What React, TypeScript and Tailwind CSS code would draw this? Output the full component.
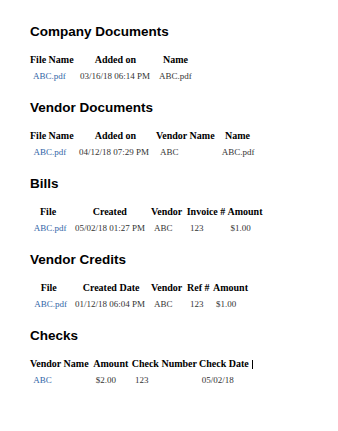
import React from "react";

type Col = { w: string; hp: string; dp: string };
type TableProps = { cols: Col[]; headers: string[]; row: string[]; linkCols: number[]; caret?: boolean };

function DocTable({ cols, headers, row, linkCols, caret }: TableProps) {
  return (
    <div className="mt-[14px] font-['Liberation_Serif','Times_New_Roman',serif]">
      <div className="flex h-[12px] leading-[12px] text-[10px] font-bold text-black whitespace-nowrap">
        {headers.map((h, i) => (
          <div key={i} className={`${cols[i].w} ${cols[i].hp} shrink-0`}>
            {h}
            {caret && i === headers.length - 1 ? (
              <span className="inline-block w-px h-[9px] bg-black ml-[3px] align-[-2px]" />
            ) : null}
          </div>
        ))}
      </div>
      <div className="mt-[4px] flex h-[12px] leading-[12px] text-[9px] text-[#333] whitespace-nowrap">
        {row.map((d, i) => (
          <div key={i} className={`${cols[i].w} ${cols[i].dp} shrink-0`}>
            {linkCols.includes(i) ? <a className="text-[#2f64a6]">{d}</a> : d}
          </div>
        ))}
      </div>
    </div>
  );
}

function Section({ title, children }: { title: string; children: React.ReactNode }) {
  return (
    <section className="mb-[18px]">
      <h3 className="h-[16px] leading-[16px] text-[13.5px] font-bold text-black font-['Liberation_Sans',Arial,sans-serif]">
        {title}
      </h3>
      {children}
    </section>
  );
}

export default function App() {
  return (
    <div className="w-[338px] h-[431px] bg-white pl-[30px] pt-[23.5px] overflow-hidden">
      <Section title="Company Documents">
        <DocTable
          cols={[
            { w: "w-[50px]", hp: "pl-0", dp: "pl-[3px]" },
            { w: "w-[79px]", hp: "pl-[14.7px]", dp: "pl-0" },
            { w: "w-[60px]", hp: "pl-[4px]", dp: "pl-0" },
          ]}
          headers={["File Name", "Added on", "Name"]}
          row={["ABC.pdf", "03/16/18 06:14 PM", "ABC.pdf"]}
          linkCols={[0]}
        />
      </Section>
      <Section title="Vendor Documents">
        <DocTable
          cols={[
            { w: "w-[49px]", hp: "pl-0", dp: "pl-[3.5px]" },
            { w: "w-[77px]", hp: "pl-[15.7px]", dp: "pl-0" },
            { w: "w-[65.7px]", hp: "pl-0", dp: "pl-[4px]" },
            { w: "w-[60px]", hp: "pl-[3.3px]", dp: "pl-0" },
          ]}
          headers={["File Name", "Added on", "Vendor Name", "Name"]}
          row={["ABC.pdf", "04/12/18 07:29 PM", "ABC", "ABC.pdf"]}
          linkCols={[0]}
        />
      </Section>
      <Section title="Bills">
        <DocTable
          cols={[
            { w: "w-[45px]", hp: "pl-[10px]", dp: "pl-[3.7px]" },
            { w: "w-[76px]", hp: "pl-[17.7px]", dp: "pl-0" },
            { w: "w-[35.7px]", hp: "pl-0", dp: "pl-[3px]" },
            { w: "w-[40.8px]", hp: "pl-0", dp: "pl-[3.3px]" },
            { w: "w-[60px]", hp: "pl-0", dp: "pl-[3px]" },
          ]}
          headers={["File", "Created", "Vendor", "Invoice #", "Amount"]}
          row={["ABC.pdf", "05/02/18 01:27 PM", "ABC", "123", "$1.00"]}
          linkCols={[0]}
        />
      </Section>
      <Section title="Vendor Credits">
        <DocTable
          cols={[
            { w: "w-[45px]", hp: "pl-[10.7px]", dp: "pl-[4.3px]" },
            { w: "w-[76px]", hp: "pl-[7.7px]", dp: "pl-0" },
            { w: "w-[36px]", hp: "pl-0", dp: "pl-[3px]" },
            { w: "w-[26px]", hp: "pl-0", dp: "pl-[3px]" },
            { w: "w-[60px]", hp: "pl-0", dp: "pl-[3px]" },
          ]}
          headers={["File", "Created Date", "Vendor", "Ref #", "Amount"]}
          row={["ABC.pdf", "01/12/18 06:04 PM", "ABC", "123", "$1.00"]}
          linkCols={[0]}
        />
      </Section>
      <Section title="Checks">
        <DocTable
          cols={[
            { w: "w-[63.3px]", hp: "pl-0", dp: "pl-[3.3px]" },
            { w: "w-[38.4px]", hp: "pl-0", dp: "pl-[2.4px]" },
            { w: "w-[67.3px]", hp: "pl-0", dp: "pl-[3.3px]" },
            { w: "w-[70px]", hp: "pl-0", dp: "pl-[2.7px]" },
          ]}
          headers={["Vendor Name", "Amount", "Check Number", "Check Date"]}
          row={["ABC", "$2.00", "123", "05/02/18"]}
          linkCols={[0]}
          caret
        />
      </Section>
    </div>
  );
}
